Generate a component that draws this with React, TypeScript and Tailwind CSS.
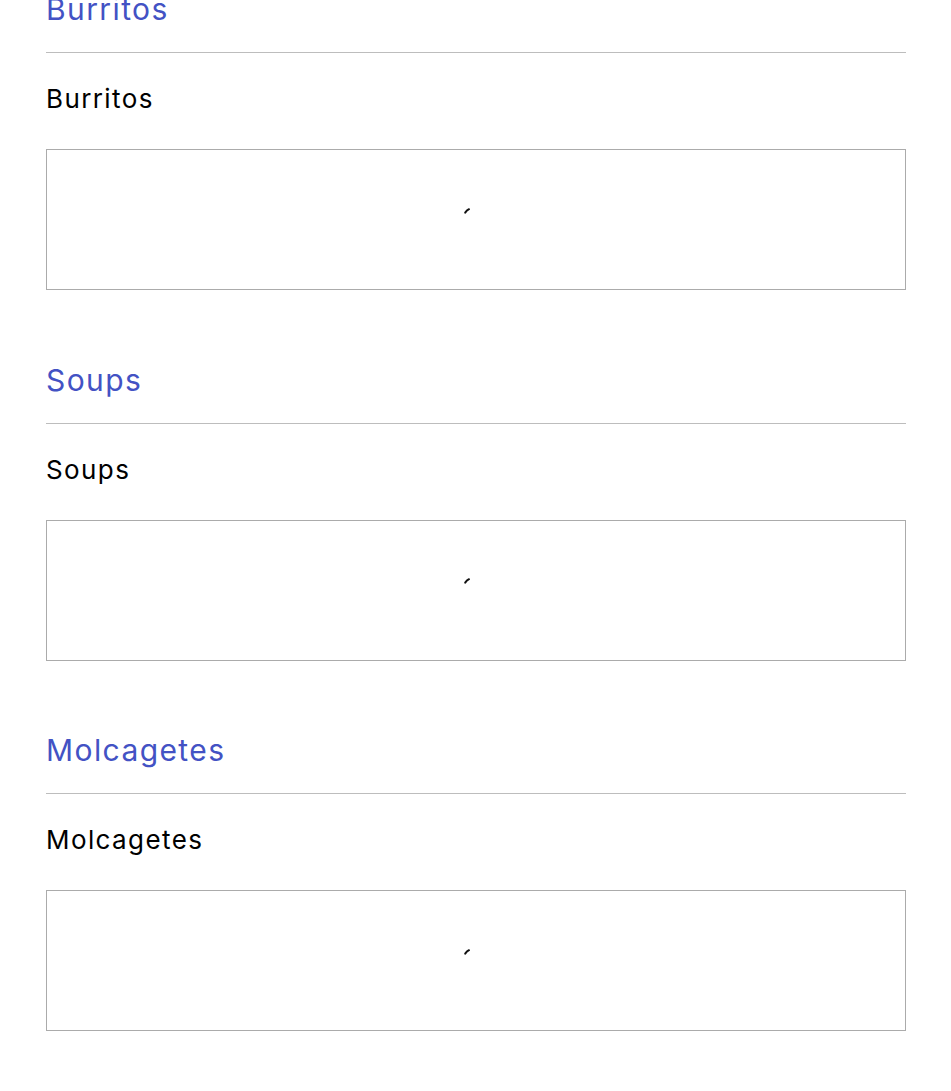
import React from "react";

const sections = ["Burritos", "Soups", "Molcagetes"];

function Spinner() {
  // loader caught mid-spin: only a short arc of the ring shows
  return (
    <svg width="28" height="28" viewBox="0 0 28 28" className="block">
      <path d="M3.2 9.6 A12 12 0 0 1 7 6.2" fill="none" stroke="#111" strokeWidth="2" strokeLinecap="round" />
    </svg>
  );
}

function MenuSection({ title }: { title: string }) {
  return (
    <section className="flex flex-col">
      <h2 className="text-[30px] leading-[36px] text-[#4352c4] tracking-[1.4px]">{title}</h2>
      <hr className="mt-[25px] border-0 border-t border-[#bdbdbd]" />
      <h3 className="mt-[30px] text-[26px] leading-[32px] text-black tracking-[1.4px]">{title}</h3>
      <div className="mt-[34px] h-[141px] border border-[#ababab] flex items-center justify-center">
        <div className="-mt-[6px] -ml-[1px]">
          <Spinner />
        </div>
      </div>
    </section>
  );
}

export default function App() {
  return (
    <div className="min-h-[1091px] bg-white px-[45px] overflow-hidden" style={{ fontFamily: "Inter, 'Noto Sans', sans-serif" }}>
      <div className="-mt-[9px] flex flex-col gap-[71.5px] w-[860px] ml-[1px]">
        {sections.map((s) => (
          <MenuSection key={s} title={s} />
        ))}
      </div>
    </div>
  );
}
